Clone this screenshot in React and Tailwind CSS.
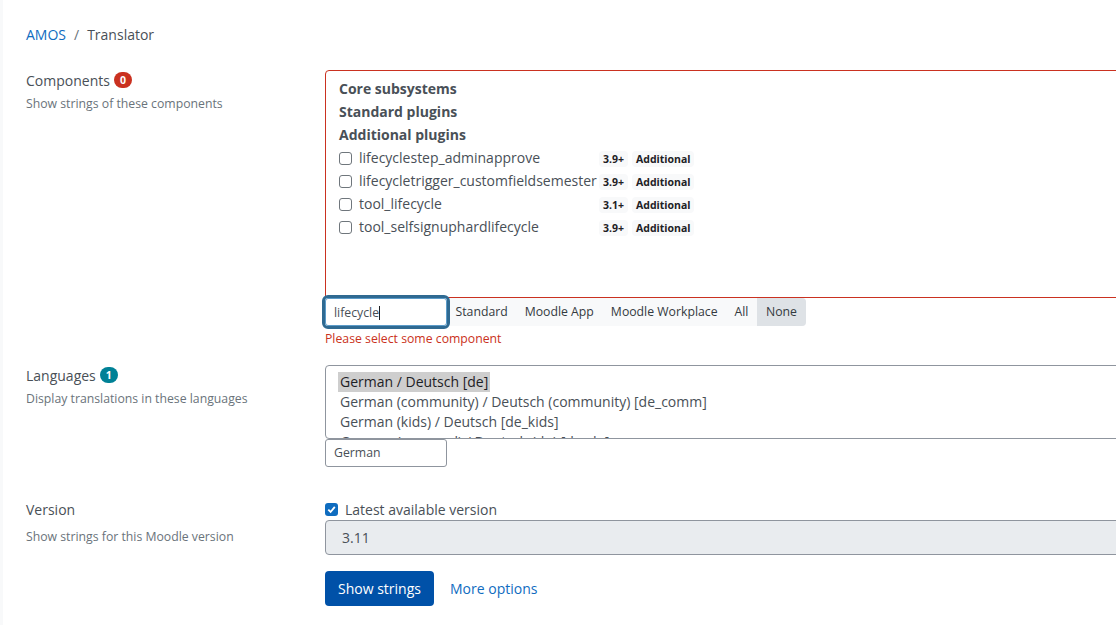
import React from "react";

const components = [
    { name: "lifecyclestep_adminapprove", version: "3.9+" },
    { name: "lifecycletrigger_customfieldsemester", version: "3.9+" },
    { name: "tool_lifecycle", version: "3.1+" },
    { name: "tool_selfsignuphardlifecycle", version: "3.9+" },
];

const filters = ["Standard", "Moodle App", "Moodle Workplace", "All"];

function Tag({ children }) {
    return (
        <span className="h-[16px] px-1 rounded bg-[#f8f9fa] text-[10.5px] leading-[16px] font-bold text-[#1d2125]">
            {children}
        </span>
    );
}

function ComponentRow({ item }) {
    return (
        <div className="h-[23px] flex items-center">
            <span className="w-[13px] h-[13px] mt-[1px] shrink-0 rounded-[3px] border border-[#6f767c] bg-white" />
            <span className="ml-[7px] w-[240px] whitespace-nowrap text-[14px] text-[#495057]">{item.name}</span>
            <div className="flex gap-1 mt-[3px]">
                <Tag>{item.version}</Tag>
                <Tag>Additional</Tag>
            </div>
        </div>
    );
}

export default function App() {
    return (
        <div
            className="w-[1116px] h-[625px] overflow-hidden bg-white flex text-[14px] text-[#495057]"
            style={{ fontFamily: '"Open Sans", sans-serif' }}
        >
            <div className="w-[3px] shrink-0 bg-[#f8f9fa]" />
            <main className="flex-1 min-w-0 pl-[23px] pt-[25px]">
                <nav className="h-[20px] flex items-center leading-[20px]">
                    <a className="text-[#0f6cbf]">AMOS</a>
                    <span className="mx-2 text-[#6a737b]">/</span>
                    <span>Translator</span>
                </nav>

                <section className="flex mt-[25px]">
                    <div className="w-[299px] shrink-0">
                        <div className="flex items-center h-[20px]">
                            <span>Components</span>
                            <span className="ml-1 w-[18px] h-[16px] rounded-full bg-[#ca3120] text-white text-[10.5px] font-bold leading-[16px] text-center">0</span>
                        </div>
                        <p className="mt-[5px] text-[12.25px] leading-[18px] text-[#6a737b]">Show strings of these components</p>
                    </div>
                    <div className="w-[900px] shrink-0">
                        <div className="h-[228px] border border-[#ca3120] rounded-tl-[4px] pl-[13px] pt-[6px]">
                            <div className="h-[23px] leading-[23px] font-bold">Core subsystems</div>
                            <div className="h-[23px] leading-[23px] font-bold">Standard plugins</div>
                            <div className="h-[23px] leading-[23px] font-bold">Additional plugins</div>
                            {components.map((c) => (
                                <ComponentRow key={c.name} item={c} />
                            ))}
                        </div>
                        <div className="flex h-[28px]">
                            <div className="relative w-[122px] h-[28px] bg-white rounded-[3px] border border-[#5b9bc9] outline-[3px] outline-[#2f6a92] pl-[8px] text-[12.25px] leading-[27px] text-[#495057]">
                                lifecycle<span className="inline-block w-px h-[14px] bg-[#1d2125] align-[-3px]" />
                            </div>
                            <div className="flex bg-[#f8f9fa] rounded-r-[4px] text-[12.25px] leading-[28px] text-[#343a40]">
                                {filters.map((f) => (
                                    <span key={f} className="px-[8.5px]">{f}</span>
                                ))}
                                <span className="px-[9px] bg-[#dee2e6] rounded-r-[4px]">None</span>
                            </div>
                        </div>
                        <p className="mt-[4px] text-[12.25px] leading-[18px] text-[#ca3120]">Please select some component</p>
                    </div>
                </section>

                <section className="flex mt-[17px]">
                    <div className="w-[299px] shrink-0">
                        <div className="flex items-center h-[20px]">
                            <span>Languages</span>
                            <span className="ml-1 w-[18px] h-[16px] rounded-full bg-[#008196] text-white text-[10.5px] font-bold leading-[16px] text-center">1</span>
                        </div>
                        <p className="mt-[5px] text-[12.25px] leading-[18px] text-[#6a737b]">Display translations in these languages</p>
                    </div>
                    <div className="w-[900px] shrink-0">
                        <div className="h-[74px] overflow-hidden border border-[#8f959e] rounded-tl-[4px] rounded-bl-[4px] pl-[14px] pt-[6px] leading-[20px]">
                            <div className="w-fit bg-[#cecece] text-[#1d2125] px-[2px] -ml-[2px]">German / Deutsch [de]</div>
                            <div>German (community) / Deutsch (community) [de_comm]</div>
                            <div>German (kids) / Deutsch [de_kids]</div>
                            <div>German (personal) / Deutsch (du) [de_du]</div>
                        </div>
                        <div className="w-[122px] h-[28px] border border-[#8f959e] rounded-[3px] pl-[8px] text-[12.25px] leading-[26px]">German</div>
                    </div>
                </section>

                <section className="flex mt-[33px]">
                    <div className="w-[299px] shrink-0">
                        <div className="h-[20px] leading-[20px]">Version</div>
                        <p className="mt-[8px] text-[12.25px] leading-[18px] text-[#6a737b]">Show strings for this Moodle version</p>
                    </div>
                    <div className="w-[900px] shrink-0">
                        <div className="flex items-center h-[19px] mb-[1px]">
                            <span className="w-[13px] h-[13px] rounded-[3px] bg-[#0f6cbf] flex items-center justify-center">
                                <svg viewBox="0 0 12 12" className="w-[11px] h-[11px]" fill="none" stroke="white" strokeWidth="2">
                                    <path d="M2.5 6.2 5 8.7 9.6 3.2" />
                                </svg>
                            </span>
                            <span className="ml-[7px]">Latest available version</span>
                        </div>
                        <div className="h-[35px] border border-[#8f959e] rounded-l-[4px] bg-[#e9ecef] pl-[16px] leading-[33px]">3.11</div>
                        <div className="flex items-center mt-[16px]">
                            <button className="w-[109px] h-[35px] rounded-[4px] bg-[#0051a8] text-white text-[14px]">Show strings</button>
                            <a className="ml-[16px] text-[#0f6cbf]">More options</a>
                        </div>
                    </div>
                </section>
            </main>
        </div>
    );
}
